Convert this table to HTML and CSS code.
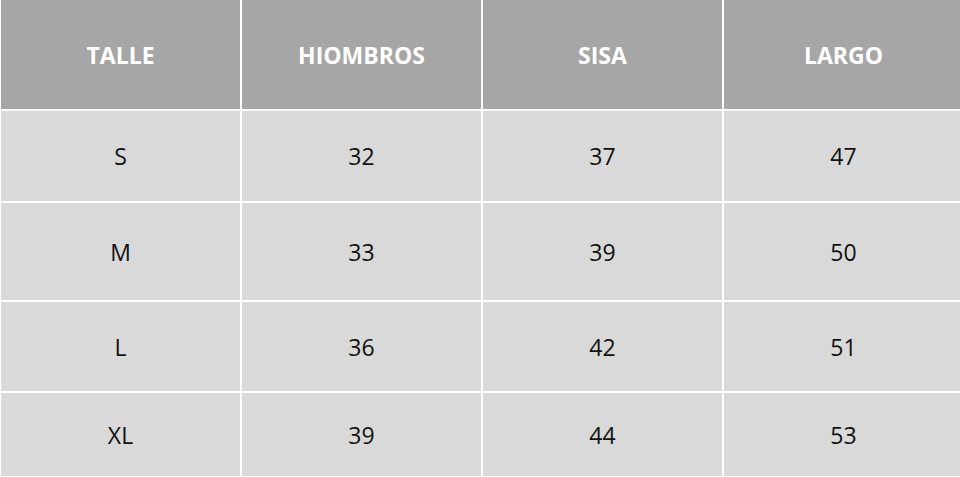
FILE: index.html
```html
<!DOCTYPE html>
<html lang="es">
<head>
<meta charset="utf-8">
<link rel="stylesheet" href="styles.css">
</head>
<body>
<table class="sizes">
  <thead>
    <tr class="head-row">
      <th>TALLE</th><th>HIOMBROS</th><th>SISA</th><th>LARGO</th>
    </tr>
  </thead>
  <tbody>
    <tr class="r1"><td>S</td><td>32</td><td>37</td><td>47</td></tr>
    <tr class="r2"><td>M</td><td>33</td><td>39</td><td>50</td></tr>
    <tr class="r3"><td>L</td><td>36</td><td>42</td><td>51</td></tr>
    <tr class="r4"><td>XL</td><td>39</td><td>44</td><td>53</td></tr>
  </tbody>
</table>
</body>
</html>
```
FILE: styles.css
```css
html, body {
  margin: 0;
  padding: 0;
  background: #ffffff;
  overflow: hidden;
}
.sizes {
  border-collapse: separate;
  border-spacing: 2px;
  margin: -2px 0 0 -1px;
  table-layout: fixed;
  width: 966px;
  font-family: "Open Sans", "Liberation Sans", sans-serif;
  font-size: 23px;
}
.sizes th,
.sizes td {
  width: 239px;
  padding: 0;
  text-align: center;
  vertical-align: middle;
}
.sizes th {
  background: #a6a6a6;
  color: #ffffff;
  font-weight: 700;
  height: 109px;
}
.sizes td {
  background: #d9d9d9;
  color: #111111;
  font-weight: 400;
}
.r1 td { height: 90px; }
.r2 td { height: 97px; }
.r3 td { height: 89px; }
.r4 td { height: 83px; }
```
